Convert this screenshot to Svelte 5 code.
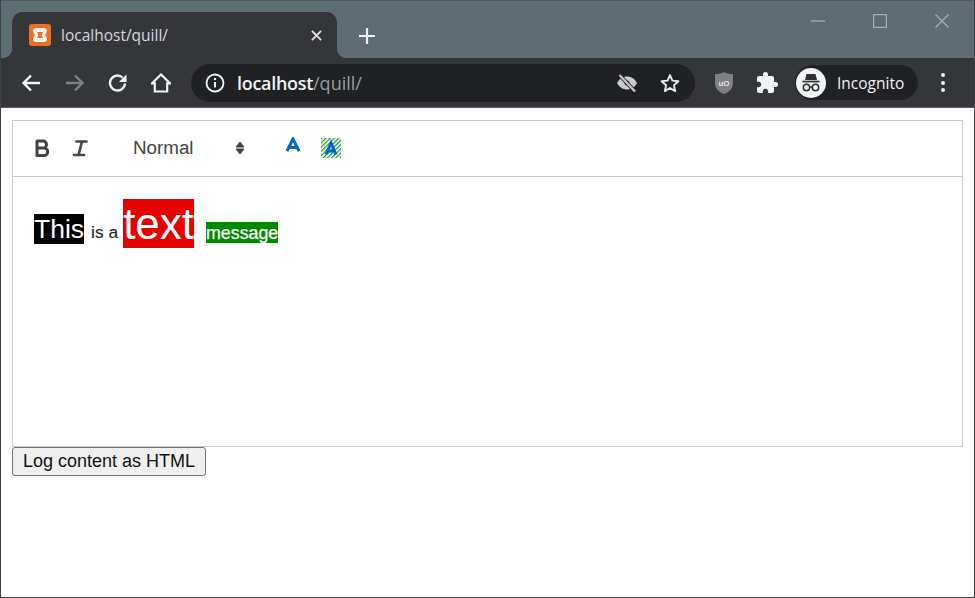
<script>
  const spans = [
    { text: 'This', cls: 'this' },
    { text: 'is a', cls: 'isa' },
    { text: 'text', cls: 'big' },
    { text: 'message', cls: 'msg' }
  ];
</script>

<div class="window">
  <header class="titlebar">
    <div class="tab">
      <svg class="favicon" viewBox="0 0 22 22" aria-hidden="true">
        <rect width="22" height="22" rx="3" fill="#ea7029" />
        <path d="M7 4h8a3 3 0 0 1 3 3c0 1.600-1 2.600-2 4 1 1.400 2 2.400 2 4a3 3 0 0 1-3 3H7a3 3 0 0 1-3-3c0-1.600 1-2.600 2-4-1-1.400-2-2.400-2-4a3 3 0 0 1 3-3z" fill="#fdf3ea" />
        <path d="M8 8h6l-1.500 3 1.500 3H8l1.500-3z" fill="#ea7029" />
      </svg>
      <span class="tab-title">localhost/quill/</span>
      <svg class="tab-close" viewBox="0 0 12 12" aria-hidden="true">
        <path d="M1 1l10 10M11 1L1 11" stroke="#e3e4e5" stroke-width="2" />
      </svg>
    </div>
    <svg class="plus" viewBox="0 0 16 16" aria-hidden="true">
      <path d="M8 0v16M0 8h16" stroke="#f1f3f4" stroke-width="2.200" />
    </svg>
    <div class="win-controls">
      <svg viewBox="0 0 14 14" aria-hidden="true"><path d="M0 7h14" stroke="#a9b3b7" stroke-width="1.200" /></svg>
      <svg viewBox="0 0 14 14" aria-hidden="true"><rect x=".6" y=".6" width="12.800" height="12.800" fill="none" stroke="#a9b3b7" stroke-width="1.200" /></svg>
      <svg viewBox="0 0 14 14" aria-hidden="true"><path d="M.5.5l13 13M13.500.5l-13 13" stroke="#a9b3b7" stroke-width="1.100" /></svg>
    </div>
  </header>

  <nav class="navbar">
    <svg class="nav-icon" viewBox="0 0 20 20" aria-hidden="true">
      <path d="M19 10H3M10 2.500L2.500 10l7.500 7.500" fill="none" stroke="#f1f3f4" stroke-width="2.400" />
    </svg>
    <svg class="nav-icon" viewBox="0 0 20 20" aria-hidden="true">
      <path d="M1 10h16M10 2.500l7.500 7.500-7.500 7.500" fill="none" stroke="#7f8184" stroke-width="2.400" />
    </svg>
    <svg class="nav-icon" viewBox="0 0 20 20" aria-hidden="true">
      <path d="M17 10.500a7.500 7.500 0 1 1-2.200-5.800" fill="none" stroke="#f1f3f4" stroke-width="2.400" />
      <path d="M18.500 1.500v7.500H11z" fill="#f1f3f4" />
    </svg>
    <svg class="nav-icon home" viewBox="0 0 20 20" aria-hidden="true">
      <path d="M10 1.500L.8 10.400h3v8.100h12.400v-8.100h3z" fill="none" stroke="#f1f3f4" stroke-width="2.200" stroke-linejoin="miter" />
    </svg>

    <div class="omnibox">
      <svg class="info" viewBox="0 0 20 20" aria-hidden="true">
        <circle cx="10" cy="10" r="8.500" fill="none" stroke="#f1f3f4" stroke-width="1.800" />
        <path d="M10 9v5.500" stroke="#f1f3f4" stroke-width="2" />
        <circle cx="10" cy="6" r="1.200" fill="#f1f3f4" />
      </svg>
      <span class="url"><b>localhost</b><span>/quill/</span></span>
      <svg class="omni-icon eye" viewBox="0 0 22 22" aria-hidden="true">
        <path d="M1 11c2.500-4.500 6-6.500 10-6.500S18.500 6.500 21 11c-2.500 4.500-6 6.500-10 6.500S3.500 15.500 1 11z" fill="#c9cbce" />
        <circle cx="11" cy="11" r="2.500" fill="#202124" />
        <path d="M3 2.500l16 17" stroke="#202124" stroke-width="4" />
        <path d="M3.500 3l15.500 16.500" stroke="#c9cbce" stroke-width="2.200" />
      </svg>
      <svg class="omni-icon star" viewBox="0 0 22 22" aria-hidden="true">
        <path d="M11 3l2.400 5.600 6 .6-4.500 4 1.300 5.900L11 16l-5.200 3.100 1.300-5.900-4.500-4 6-.6z" fill="none" stroke="#e8eaed" stroke-width="1.900" stroke-linejoin="round" />
      </svg>
    </div>

    <svg class="ublock" viewBox="0 0 20 24" aria-hidden="true">
      <path d="M10 1c3 1.500 6 2 9 2v9c0 5-3.500 9-9 11C4.500 21 1 17 1 12V3c3 0 6-.5 9-2z" fill="#7f8183" />
      <text x="10" y="14.500" text-anchor="middle" class="ub">uO</text>
    </svg>
    <svg class="puzzle" viewBox="0 0 22 22" aria-hidden="true">
      <path d="M19.500 10H18V6c0-1.100-.9-2-2-2h-4V2.500a2.500 2.500 0 0 0-5 0V4H3c-1.100 0-2 .9-2 2v3.800h1.500c1.500 0 2.700 1.200 2.700 2.700S4 15.200 2.500 15.200H1V19c0 1.100.9 2 2 2h3.800v-1.500c0-1.500 1.200-2.700 2.700-2.700s2.700 1.200 2.700 2.700V21H16c1.100 0 2-.9 2-2v-4h1.500a2.500 2.500 0 0 0 0-5z" fill="#f1f3f4" />
    </svg>
    <div class="profile">
      <svg class="avatar" viewBox="0 0 30 30" aria-hidden="true">
        <circle cx="15" cy="15" r="15" fill="#f4f5f5" />
        <path d="M10.500 6h9l1.500 6H9z" fill="#2f3033" />
        <path d="M6.500 12.700h17v1.700h-17z" fill="#2f3033" />
        <circle cx="10.500" cy="19.500" r="3.200" fill="none" stroke="#2f3033" stroke-width="1.500" />
        <circle cx="19.500" cy="19.500" r="3.200" fill="none" stroke="#2f3033" stroke-width="1.500" />
        <path d="M13.500 19h3" stroke="#2f3033" stroke-width="1.500" />
      </svg>
      <span>Incognito</span>
    </div>
    <div class="kebab"><i></i><i></i><i></i></div>
  </nav>

  <main class="page">
    <div class="editor">
      <div class="ql-toolbar">
        <svg class="tool bold" viewBox="0 0 16 18" aria-hidden="true">
          <path d="M3 2h6a3.500 3.500 0 0 1 0 7H3zM3 9h7a3.700 3.700 0 0 1 0 7.500H3z" fill="none" stroke="#444" stroke-width="3" stroke-linejoin="round" />
        </svg>
        <svg class="tool italic" viewBox="0 0 16 18" aria-hidden="true">
          <path d="M4.500 2.500h10M2 16h10M10 2.500L6.500 16" fill="none" stroke="#444" stroke-width="2.600" stroke-linecap="round" />
        </svg>
        <div class="picker">
          <span>Normal</span>
          <svg viewBox="0 0 10 14" aria-hidden="true">
            <path d="M5 1l4 5H1zM5 13l4-5H1z" fill="#444" stroke="#444" stroke-linejoin="round" />
          </svg>
        </div>
        <svg class="tool color" viewBox="0 0 16 16" aria-hidden="true">
          <path d="M2 14L8 2l6 12M4.300 10.500h7.400" fill="none" stroke="#0066cc" stroke-width="3" />
        </svg>
        <svg class="tool bg" viewBox="0 0 20 20" aria-hidden="true">
          <defs>
            <pattern id="hatch" width="3" height="3" patternUnits="userSpaceOnUse" patternTransform="rotate(-45)">
              <rect width="3" height="1.300" fill="#1f9d3a" />
            </pattern>
          </defs>
          <rect width="20" height="20" fill="#fff" />
          <rect width="20" height="20" fill="url(#hatch)" />
          <path d="M5 16.500L10 5l5 11.500M6.800 13h6.400" fill="none" stroke="#0066cc" stroke-width="3" />
        </svg>
      </div>
      <div class="ql-editor">
        <p>
          {#each spans as s}
            <span class={s.cls}>{s.text}</span>
          {/each}
        </p>
      </div>
    </div>
    <button type="button">Log content as HTML</button>
  </main>
</div>

<style>
  :global(body) {
    margin: 0;
    background: #fff;
  }

  .window {
    width: 975px;
    height: 598px;
    box-sizing: border-box;
    display: flex;
    flex-direction: column;
    border-left: 1px solid #3f4245;
    border-right: 1px solid #3f4245;
    border-bottom: 1px solid #3f4245;
    overflow: hidden;
    font-family: "Liberation Sans", Arial, sans-serif;
  }

  .titlebar {
    height: 58px;
    flex: none;
    box-sizing: border-box;
    background: #5d6d73;
    border-top: 1px solid #54585c;
    display: flex;
    align-items: flex-end;
    padding-left: 11px;
  }

  .tab {
    position: relative;
    width: 325px;
    height: 46px;
    box-sizing: border-box;
    background: #35363a;
    border-radius: 10px 10px 0 0;
    display: flex;
    align-items: center;
    padding: 0 15px 0 17px;
  }

  .tab::before,
  .tab::after {
    content: "";
    position: absolute;
    bottom: 0;
    width: 10px;
    height: 10px;
  }

  .tab::before {
    left: -10px;
    background: radial-gradient(circle at 0 0, transparent 10px, #35363a 10.500px);
  }

  .tab::after {
    right: -10px;
    background: radial-gradient(circle at 100% 0, transparent 10px, #35363a 10.500px);
  }

  .favicon {
    width: 22px;
    height: 22px;
    flex: none;
  }

  .tab-title {
    margin-left: 10px;
    flex: 1;
    font: 15.500px "Open Sans", sans-serif;
    color: #d6d8da;
  }

  .tab-close {
    width: 11px;
    height: 11px;
  }

  .plus {
    width: 16px;
    height: 16px;
    margin: 0 0 14px 22px;
  }

  .win-controls {
    margin-left: auto;
    align-self: flex-start;
    display: flex;
    gap: 48px;
    padding: 13px 25px 0 0;
  }

  .win-controls svg {
    width: 14px;
    height: 14px;
  }

  .navbar {
    height: 50px;
    flex: none;
    box-sizing: border-box;
    background: #35363a;
    border-bottom: 1px solid #5a5c5f;
    display: flex;
    align-items: center;
    padding: 0 0 0 20px;
  }

  .nav-icon {
    width: 20px;
    height: 20px;
    margin-right: 23.500px;
    flex: none;
  }

  .home {
    margin-left: -1px;
  }

  .omnibox {
    width: 504px;
    height: 38px;
    box-sizing: border-box;
    margin-left: -3px;
    background: #202124;
    border-radius: 19px;
    display: flex;
    align-items: center;
    padding-left: 14px;
    flex: none;
  }

  .info {
    width: 20px;
    height: 20px;
  }

  .url {
    margin-left: 12px;
    flex: 1;
    font: 18px "Open Sans", sans-serif;
    color: #9a9da0;
  }

  .url b {
    font-weight: 600;
    letter-spacing: -0.3px;
    color: #f1f3f4;
  }

  .omni-icon {
    width: 22px;
    height: 22px;
  }

  .eye {
    margin-right: 21px;
  }

  .star {
    margin-right: 14px;
  }

  .ublock {
    width: 20px;
    height: 24px;
    margin-left: 19px;
    flex: none;
  }

  .ub {
    font: bold 8px "Liberation Sans", sans-serif;
    fill: #e6e6e6;
  }

  .puzzle {
    width: 22px;
    height: 22px;
    margin-left: 22px;
    flex: none;
  }

  .profile {
    width: 123px;
    height: 35px;
    box-sizing: border-box;
    margin-left: 17px;
    background: #202124;
    border-radius: 18px;
    display: flex;
    align-items: center;
    padding-left: 1px;
    flex: none;
    font: 15.500px "Open Sans", sans-serif;
    color: #f1f3f4;
  }

  .avatar {
    width: 30px;
    height: 30px;
    margin-right: 11px;
  }

  .kebab {
    margin-left: 23px;
    display: flex;
    flex-direction: column;
    gap: 3.500px;
  }

  .kebab i {
    display: block;
    width: 4px;
    height: 4px;
    border-radius: 50%;
    background: #f1f3f4;
  }

  .page {
    flex: 1;
    background: #fff;
    padding: 12px 0 0 11px;
  }

  .editor {
    width: 951px;
    height: 327px;
    box-sizing: border-box;
    border: 1px solid #ccc;
    display: flex;
    flex-direction: column;
  }

  .ql-toolbar {
    height: 56px;
    flex: none;
    box-sizing: border-box;
    border-bottom: 1px solid #ccc;
    display: flex;
    align-items: center;
    padding: 0 0 2px 21px;
  }

  .tool {
    flex: none;
  }

  .bold {
    width: 16px;
    height: 18px;
  }

  .italic {
    width: 16px;
    height: 18px;
    margin-left: 22px;
  }

  .picker {
    width: 115px;
    margin-left: 45px;
    display: flex;
    align-items: center;
    justify-content: space-between;
    box-sizing: border-box;
    padding-right: 3px;
    font-size: 18.800px;
    color: #444;
  }

  .picker svg {
    width: 10px;
    height: 14px;
  }

  .color {
    width: 16px;
    height: 16px;
    margin: -5px 0 0 37px;
  }

  .bg {
    width: 20px;
    height: 20px;
    margin-left: 20px;
  }

  .ql-editor {
    flex: 1;
    padding: 22px 21px 0;
  }

  .ql-editor p {
    margin: 0;
    display: flex;
    align-items: flex-start;
  }

  .ql-editor span {
    display: block;
    white-space: nowrap;
  }

  .this {
    margin-top: 15px;
    background: #000;
    color: #fff;
    font-size: 26.500px;
    line-height: 30px;
  }

  .isa {
    margin: 23px 0 0 7px;
    color: #222;
    font-size: 17.400px;
    line-height: 21px;
    -webkit-text-stroke: 0.1px #222;
  }

  .big {
    margin-left: 5px;
    background: #e60000;
    color: #fff;
    font-size: 44px;
    line-height: 49px;
  }

  .msg {
    margin: 23px 0 0 12px;
    height: 21px;
    background: #008a00;
    color: #fff;
    font-size: 17.800px;
    line-height: 23px;
    -webkit-text-stroke: 0.25px #fff;
  }

  button {
    display: block;
    width: 194px;
    height: 29px;
    box-sizing: border-box;
    padding: 0;
    background: #efefef;
    border: 1px solid #767676;
    border-radius: 3px;
    font: 18px "Liberation Sans", Arial, sans-serif;
    color: #111;
    text-align: center;
  }
</style>
